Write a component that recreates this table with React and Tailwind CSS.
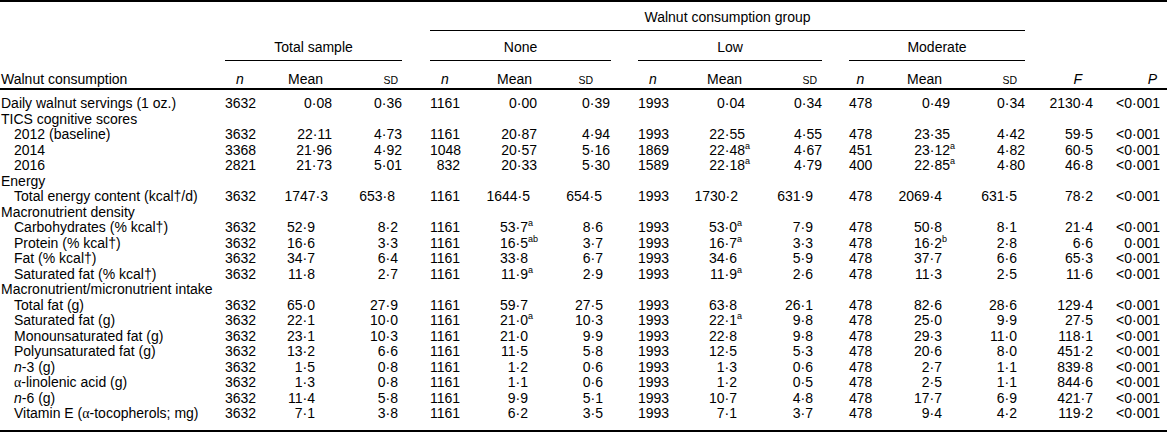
import React from "react";

const GRID =
  "grid grid-cols-[225px_30px_77px_70px_28px_30px_77px_74px_27px_30px_77px_77px_27px_23px_78px_75px_68px_67px_7px]";

const PAD = {
  A: ["", "", "", "", "", "pr-[1px]", "", "", "", "", "", "", "", ""],
  E: ["", "pr-[4px]", "pr-[7px]", "", "pr-[7px]", "pr-[9px]", "", "pr-[7px]", "pr-[9px]", "", "pr-[8px]", "pr-[8px]", "", ""],
  D: ["", "pr-[17px]", "pr-[4px]", "", "pr-[9px]", "pr-[8px]", "", "pr-[8px]", "pr-[9px]", "", "pr-[8px]", "pr-[8px]", "", ""],
};

const N = () => <i>n</i>;
const Alpha = () => <span className="font-['Liberation_Serif',serif]">α</span>;

const rows = [
  { label: "Daily walnut servings (1 oz.)", t: "A", v: ["3632", "0·08", "0·36", "1161", "0·00", "0·39", "1993", "0·04", "0·34", "478", "0·49", "0·34", "2130·4", "<0·001"] },
  { label: "TICS cognitive scores" },
  { label: "2012 (baseline)", ind: true, t: "A", v: ["3632", "22·11", "4·73", "1161", "20·87", "4·94", "1993", "22·55", "4·55", "478", "23·35", "4·42", "59·5", "<0·001"] },
  { label: "2014", ind: true, t: "A", v: ["3368", "21·96", "4·92", "1048", "20·57", "5·16", "1869", ["22·48", "a"], "4·67", "451", ["23·12", "a"], "4·82", "60·5", "<0·001"] },
  { label: "2016", ind: true, t: "A", v: ["2821", "21·73", "5·01", "832", "20·33", "5·30", "1589", ["22·18", "a"], "4·79", "400", ["22·85", "a"], "4·80", "46·8", "<0·001"] },
  { label: "Energy" },
  { label: "Total energy content (kcal†/d)", ind: true, t: "E", v: ["3632", "1747·3", "653·8", "1161", "1644·5", "654·5", "1993", "1730·2", "631·9", "478", "2069·4", "631·5", "78·2", "<0·001"] },
  { label: "Macronutrient density" },
  { label: "Carbohydrates (% kcal†)", ind: true, t: "D", v: ["3632", "52·9", "8·2", "1161", ["53·7", "a"], "8·6", "1993", ["53·0", "a"], "7·9", "478", "50·8", "8·1", "21·4", "<0·001"] },
  { label: "Protein (% kcal†)", ind: true, t: "D", v: ["3632", "16·6", "3·3", "1161", ["16·5", "ab"], "3·7", "1993", ["16·7", "a"], "3·3", "478", ["16·2", "b"], "2·8", "6·6", "0·001"] },
  { label: "Fat (% kcal†)", ind: true, t: "D", v: ["3632", "34·7", "6·4", "1161", "33·8", "6·7", "1993", "34·6", "5·9", "478", "37·7", "6·6", "65·3", "<0·001"] },
  { label: "Saturated fat (% kcal†)", ind: true, t: "D", v: ["3632", "11·8", "2·7", "1161", ["11·9", "a"], "2·9", "1993", ["11·9", "a"], "2·6", "478", "11·3", "2·5", "11·6", "<0·001"] },
  { label: "Macronutrient/micronutrient intake" },
  { label: "Total fat (g)", ind: true, t: "D", v: ["3632", "65·0", "27·9", "1161", "59·7", "27·5", "1993", "63·8", "26·1", "478", "82·6", "28·6", "129·4", "<0·001"] },
  { label: "Saturated fat (g)", ind: true, t: "D", v: ["3632", "22·1", "10·0", "1161", ["21·0", "a"], "10·3", "1993", ["22·1", "a"], "9·8", "478", "25·0", "9·9", "27·5", "<0·001"] },
  { label: "Monounsaturated fat (g)", ind: true, t: "D", v: ["3632", "23·1", "10·3", "1161", "21·0", "9·9", "1993", "22·8", "9·8", "478", "29·3", "11·0", "118·1", "<0·001"] },
  { label: "Polyunsaturated fat (g)", ind: true, t: "D", v: ["3632", "13·2", "6·6", "1161", "11·5", "5·8", "1993", "12·5", "5·3", "478", "20·6", "8·0", "451·2", "<0·001"] },
  { label: <><N />-3 (g)</>, ind: true, t: "D", v: ["3632", "1·5", "0·8", "1161", "1·2", "0·6", "1993", "1·3", "0·6", "478", "2·7", "1·1", "839·8", "<0·001"] },
  { label: <><Alpha />-linolenic acid (g)</>, ind: true, t: "D", v: ["3632", "1·3", "0·8", "1161", "1·1", "0·6", "1993", "1·2", "0·5", "478", "2·5", "1·1", "844·6", "<0·001"] },
  { label: <><N />-6 (g)</>, ind: true, t: "D", v: ["3632", "11·4", "5·8", "1161", "9·9", "5·1", "1993", "10·7", "4·8", "478", "17·7", "6·9", "421·7", "<0·001"] },
  { label: <>Vitamin E (<Alpha />-tocopherols; mg)</>, ind: true, t: "D", v: ["3632", "7·1", "3·8", "1161", "6·2", "3·5", "1993", "7·1", "3·7", "478", "9·4", "4·2", "119·2", "<0·001"] },
];

function Val({ v }) {
  if (Array.isArray(v)) {
    return (
      <span className="relative">
        {v[0]}
        <span className="absolute left-full top-[0px] text-[9px] leading-none">{v[1]}</span>
      </span>
    );
  }
  return v;
}

function DataRow({ r }) {
  if (!r.v) {
    return (
      <div className="h-[15.5px] leading-[15.5px] pl-[1px] whitespace-nowrap">{r.label}</div>
    );
  }
  const pads = PAD[r.t];
  const cells = [];
  r.v.forEach((v, i) => {
    cells.push(
      <div key={"v" + i} className={"text-right whitespace-nowrap " + pads[i]}>
        <Val v={v} />
      </div>
    );
    if (i === 2 || i === 5 || i === 8) cells.push(<div key={"g" + i} />);
  });
  cells.push(<div key="end" />);
  return (
    <div className={GRID + " h-[15.5px] leading-[15.5px]"}>
      <div className={"whitespace-nowrap " + (r.ind ? "pl-[14px]" : "pl-[1px]")}>{r.label}</div>
      {cells}
    </div>
  );
}

const SD = () => <span className="text-[10.5px]">SD</span>;

export default function App() {
  return (
    <div className="w-[1167px] h-[435px] bg-white text-black font-['Liberation_Sans',Arial,sans-serif] text-[14px]">
      <div className="border-t-2 border-black">
        {/* header row 1 */}
        <div className={GRID}>
          <div className="col-start-6 col-end-17 h-[29px] border-b border-black flex items-center justify-center pt-[2px] whitespace-nowrap">
            Walnut consumption group
          </div>
        </div>
        {/* header row 2 */}
        <div className={GRID}>
          <div className="col-start-2 col-end-5 h-[30px] border-b border-black flex items-center justify-center pt-[4px]">
            Total sample
          </div>
          <div className="col-start-6 col-end-9 h-[30px] border-b border-black flex items-center justify-center pt-[4px]">
            None
          </div>
          <div className="col-start-10 col-end-13 h-[30px] border-b border-black flex items-center justify-center pt-[4px]">
            Low
          </div>
          <div className="col-start-14 col-end-17 h-[30px] border-b border-black flex items-center justify-center pt-[4px]">
            Moderate
          </div>
        </div>
        {/* header row 3 */}
        <div className={GRID + " h-[29px] border-b-2 border-black items-center pt-[8px]"}>
          <div className="pl-[1px] whitespace-nowrap">Walnut consumption</div>
          <div className="text-center"><N /></div>
          <div className="text-right pr-[9px]">Mean</div>
          <div className="text-right pr-[4px]"><SD /></div>
          <div />
          <div className="text-center"><N /></div>
          <div className="text-right pr-[5px]">Mean</div>
          <div className="text-right pr-[18px]"><SD /></div>
          <div />
          <div className="text-center"><N /></div>
          <div className="text-right pr-[3px]">Mean</div>
          <div className="text-right pr-[5px]"><SD /></div>
          <div />
          <div className="text-center"><N /></div>
          <div className="text-right pr-[8px]">Mean</div>
          <div className="text-right pr-[8px]"><SD /></div>
          <div className="text-right pr-[11px]"><i>F</i></div>
          <div className="text-right pr-[3px]"><i>P</i></div>
          <div />
        </div>
        {/* data */}
        <div className="pt-[6px] pb-[8.5px] border-b-2 border-black">
          {rows.map((r, i) => (
            <DataRow key={i} r={r} />
          ))}
        </div>
      </div>
    </div>
  );
}
